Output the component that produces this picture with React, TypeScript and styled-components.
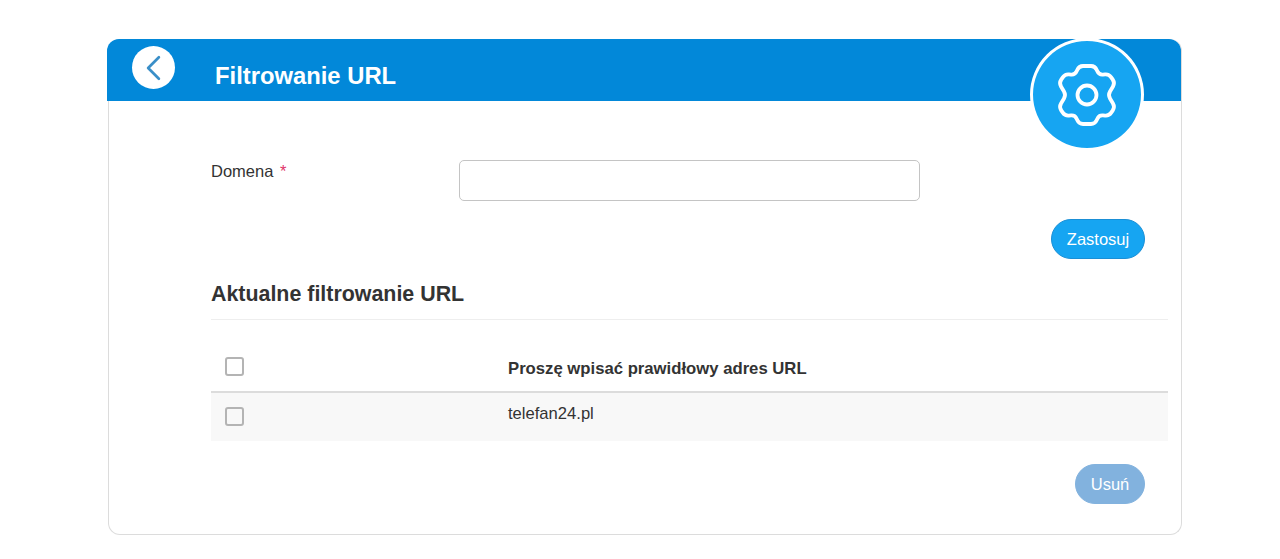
import styled, { createGlobalStyle } from "styled-components";
import { ChevronLeft } from "lucide-react";

const GlobalStyle = createGlobalStyle`
	html, body {
		margin: 0;
		padding: 0;
		background: #fff;
		font-family: "Liberation Sans", Arial, sans-serif;
		color: #333;
	}
`;

// outline of the gear, corners get rounded in roundedPath
const gearPoints = [
	[25, 6], [41, 6], [45, 15], [55, 14], [61, 23], [54, 35], [61, 47], [55, 56], [45, 55],
	[41, 64], [25, 64], [21, 55], [11, 56], [5, 47], [12, 35], [5, 23], [11, 14], [21, 15],
];

function roundedPath(points: number[][], r: number) {
	const toward = (a: number[], b: number[]) => {
		const len = Math.hypot(b[0] - a[0], b[1] - a[1]);
		const t = Math.min(r / len, 0.5);
		return [a[0] + (b[0] - a[0]) * t, a[1] + (b[1] - a[1]) * t];
	};
	let d = "";
	points.forEach((p, i) => {
		const prev = points[(i + points.length - 1) % points.length];
		const next = points[(i + 1) % points.length];
		const from = toward(p, prev);
		const to = toward(p, next);
		d += `${i === 0 ? "M" : "L"}${from[0]} ${from[1]}Q${p[0]} ${p[1]} ${to[0]} ${to[1]}`;
	});
	return d + "Z";
}

function GearIcon() {
	return (
		<svg width="66" height="70" viewBox="0 0 66 70" fill="none" stroke="currentColor" strokeWidth="3.8">
			<path d={roundedPath(gearPoints, 4)} strokeLinejoin="round" />
			<circle cx="33" cy="35" r="9.5" />
		</svg>
	);
}

export default function App() {
	return (
		<>
			<GlobalStyle />
			<Page>
				<Card>
					<Header>
						<BackButton aria-label="Wstecz">
							<ChevronLeft size={44} strokeWidth={1.5} />
						</BackButton>
						<Title>Filtrowanie URL</Title>
						<GearBadge>
							<GearIcon />
						</GearBadge>
					</Header>

					<Body>
						<FormRow>
							<Label>
								Domena <Required>*</Required>
							</Label>
							<TextInput type="text" />
						</FormRow>

						<ApplyRow>
							<PillButton $wide>Zastosuj</PillButton>
						</ApplyRow>

						<SectionTitle>Aktualne filtrowanie URL</SectionTitle>

						<Table>
							<HeadRow>
								<CheckCell>
									<Checkbox />
								</CheckCell>
								<HeadText>Proszę wpisać prawidłowy adres URL</HeadText>
							</HeadRow>
							<DataRow>
								<CheckCell>
									<Checkbox />
								</CheckCell>
								<DataText>telefan24.pl</DataText>
							</DataRow>
						</Table>

						<RemoveRow>
							<PillButton $disabled>Usuń</PillButton>
						</RemoveRow>
					</Body>
				</Card>
			</Page>
		</>
	);
}

const Page = styled.div`
	padding: 39px 98px 24px 108px;
`;

const Card = styled.div`
	position: relative;
	width: 1074px;
	height: 496px;
	box-sizing: border-box;
	border-radius: 12px;
	border: 1px solid #dcdcdc;
	border-top: none;
	background: #fff;
`;

const Header = styled.div`
	height: 62px;
	margin: 0 0 0 -2px;
	padding-left: 25px;
	display: flex;
	align-items: flex-start;
	background: #0288d9;
	border-radius: 12px 12px 0 0;
`;

const BackButton = styled.div`
	width: 43px;
	height: 43px;
	margin-top: 7px;
	border-radius: 50%;
	background: #fff;
	color: #3a8fc8;
	display: flex;
	align-items: center;
	justify-content: center;
`;

const Title = styled.h1`
	margin: 23px 0 0 40px;
	font-size: 23.8px;
	line-height: 28px;
	font-weight: 700;
	color: #fff;
`;

const GearBadge = styled.div`
	position: absolute;
	top: -1px;
	left: 921px;
	width: 114px;
	height: 113px;
	box-sizing: border-box;
	border-radius: 50%;
	border: 3px solid #fff;
	background: #16a5f2;
	color: #fff;
	display: flex;
	align-items: center;
	justify-content: center;
`;

const Body = styled.div`
	padding: 59px 13px 0 102px;
`;

const FormRow = styled.div`
	display: flex;
	align-items: flex-start;
`;

const Label = styled.label`
	width: 248px;
	padding-top: 2px;
	font-size: 16.5px;
	line-height: 18px;
	color: #333;
`;

const Required = styled.span`
	margin-left: 2px;
	color: #e0356a;
`;

const TextInput = styled.input`
	width: 461px;
	height: 41px;
	box-sizing: border-box;
	border: 1px solid #c4c4c4;
	border-radius: 5px;
	background: #fff;
	outline: none;
`;

const ApplyRow = styled.div`
	display: flex;
	justify-content: flex-end;
	margin-top: 18px;
	padding-right: 23px;
`;

const PillButton = styled.button<{ $wide?: boolean; $disabled?: boolean }>`
	width: ${(p) => (p.$wide ? "94px" : "70px")};
	height: 40px;
	padding: 0;
	border-radius: 20px;
	border: 1px solid ${(p) => (p.$disabled ? "#82b2de" : "#1a8fd6")};
	background: ${(p) => (p.$disabled ? "#82b2de" : "#16a5f2")};
	color: #fff;
	font-family: inherit;
	font-size: 16.5px;
`;

const SectionTitle = styled.h2`
	margin: 22px 0 0;
	padding-bottom: 12px;
	border-bottom: 1px solid #eeeeee;
	font-size: 21.4px;
	line-height: 26px;
	font-weight: 700;
	color: #333;
`;

const Table = styled.div`
	margin-top: 27px;
`;

const HeadRow = styled.div`
	height: 44px;
	display: flex;
	border-bottom: 2px solid #dcdcdc;
`;

const DataRow = styled.div`
	height: 48px;
	display: flex;
	background: #f8f8f8;
`;

const CheckCell = styled.div`
	width: 297px;
	padding: 10px 0 0 14px;
	box-sizing: border-box;
	${DataRow} & {
		padding-top: 14px;
	}
`;

const Checkbox = styled.div`
	width: 19px;
	height: 19px;
	box-sizing: border-box;
	border: 2px solid #b4b4b4;
	border-radius: 3px;
	background: #fff;
	${DataRow} & {
		background: #f8f8f8;
	}
`;

const HeadText = styled.div`
	padding-top: 13px;
	font-size: 16.7px;
	line-height: 18px;
	font-weight: 700;
	color: #333;
`;

const DataText = styled.div`
	padding-top: 12px;
	font-size: 16.6px;
	line-height: 18px;
	color: #333;
`;

const RemoveRow = styled.div`
	display: flex;
	justify-content: flex-end;
	margin-top: 23px;
	padding-right: 23px;
`;
